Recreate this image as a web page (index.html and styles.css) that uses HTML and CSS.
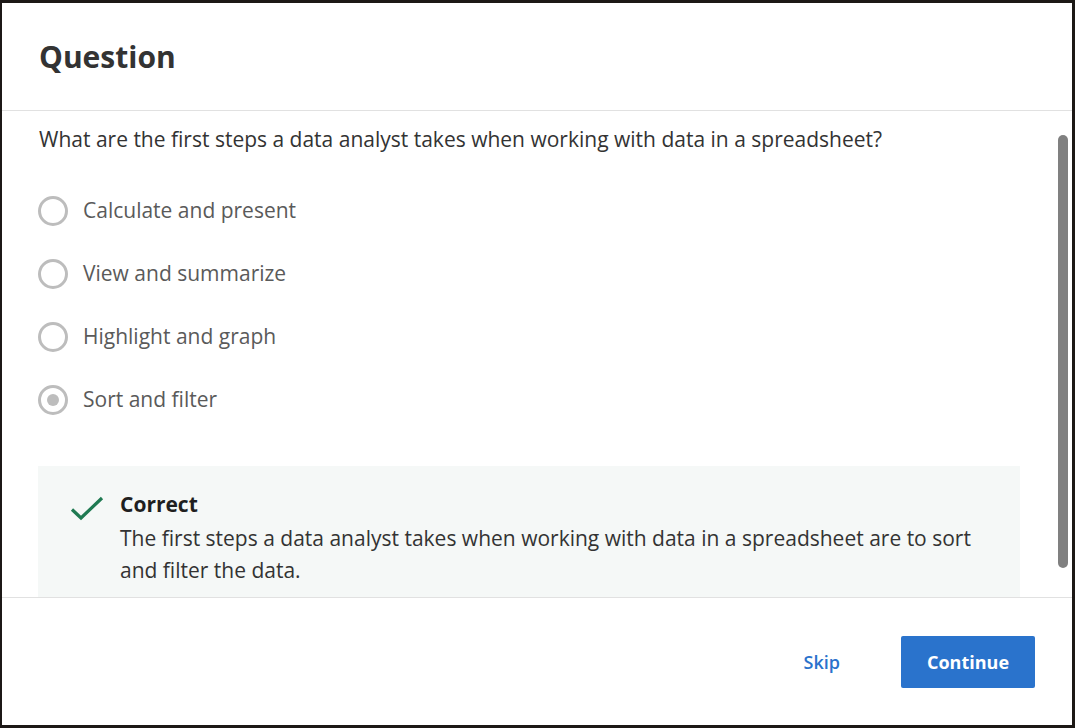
FILE: index.html
```html
<!DOCTYPE html>
<html lang="en">
<head>
<meta charset="utf-8">
<title>Question</title>
<link rel="stylesheet" href="styles.css">
</head>
<body>
<div class="dialog">
  <header class="dialog-header">
    <h1 class="title">Question</h1>
  </header>
  <main class="dialog-body">
    <p class="prompt">What are the first steps a data analyst takes when working with data in a spreadsheet?</p>
    <ul class="options">
      <li class="option"><span class="radio"></span><span class="label">Calculate and present</span></li>
      <li class="option"><span class="radio"></span><span class="label">View and summarize</span></li>
      <li class="option"><span class="radio"></span><span class="label">Highlight and graph</span></li>
      <li class="option"><span class="radio radio-checked"></span><span class="label">Sort and filter</span></li>
    </ul>
    <div class="feedback">
      <svg class="check" width="34" height="26" viewBox="0 0 34 26" aria-hidden="true">
        <path d="M2 13.5 L11 22 L32 2" fill="none" stroke="#1f7a52" stroke-width="3.2" stroke-linecap="butt" stroke-linejoin="miter"/>
      </svg>
      <div class="feedback-text">
        <div class="feedback-title">Correct</div>
        <p class="feedback-body">The first steps a data analyst takes when working with data in a spreadsheet are to sort and filter the data.</p>
      </div>
    </div>
    <div class="scrollbar"></div>
  </main>
  <footer class="dialog-footer">
    <button class="btn-link">Skip</button>
    <button class="btn-primary">Continue</button>
  </footer>
</div>
</body>
</html>
```

FILE: styles.css
```css
* { box-sizing: border-box; }
html, body { margin: 0; padding: 0; }
body {
  background: #1c1816;
  width: 1075px;
  height: 728px;
  overflow: hidden;
  font-family: "Open Sans", "Noto Sans", sans-serif;
  padding: 3px 3px 3px 2px;
}
.dialog {
  width: 1070px;
  height: 722px;
  background: #fff;
  display: flex;
  flex-direction: column;
  overflow: hidden;
}
.dialog-header {
  height: 108px;
  flex: 0 0 108px;
  border-bottom: 1px solid #e1e1e1;
  display: flex;
  align-items: center;
  padding: 0 37px;
}
.title {
  margin: 0;
  font-size: 30px;
  font-weight: 700;
  color: #333333;
}
.dialog-body {
  position: relative;
  flex: 1 1 auto;
  overflow: hidden;
  padding: 12px 52px 0 36px;
}
.prompt {
  margin: 0;
  font-size: 21px;
  line-height: 32px;
  color: #333;
  padding-left: 1px;
}
.options {
  list-style: none;
  margin: 32px 0 0;
  padding: 0;
  display: flex;
  flex-direction: column;
  gap: 15px;
}
.option {
  height: 48px;
  display: flex;
  align-items: center;
  gap: 15px;
}
.radio {
  width: 30px;
  height: 30px;
  border: 3px solid #bdbdbd;
  border-radius: 50%;
  flex: 0 0 30px;
  display: flex;
  align-items: center;
  justify-content: center;
}
.radio-checked::after {
  content: "";
  width: 12px;
  height: 12px;
  border-radius: 50%;
  background: #bdbdbd;
}
.label {
  font-size: 21px;
  color: #5a5a5a;
  margin-top: -3px;
}
.feedback {
  margin-top: 42px;
  width: 982px;
  background: #f5f8f7;
  display: flex;
  padding: 22px 30px 40px 32px;
  gap: 16px;
}
.check {
  margin-top: 8px;
  flex: 0 0 34px;
}
.feedback-title {
  font-size: 21px;
  line-height: 32px;
  font-weight: 700;
  color: #1f1f1f;
  margin-bottom: 2px;
}
.feedback-body {
  margin: 0;
  font-size: 21px;
  line-height: 32px;
  color: #333;
}
.scrollbar {
  position: absolute;
  right: 4px;
  top: 24px;
  width: 10px;
  height: 433px;
  border-radius: 5px;
  background: #808080;
}
.dialog-footer {
  flex: 0 0 128px;
  height: 128px;
  border-top: 1px solid #e1e1e1;
  display: flex;
  justify-content: flex-end;
  align-items: center;
  padding: 0 37px 0 0;
  gap: 52px;
}
.btn-link {
  font-family: inherit;
  background: none;
  border: none;
  color: #2a73cc;
  font-size: 18px;
  font-weight: 600;
  padding: 0 9px;
  cursor: pointer;
}
.btn-primary {
  font-family: inherit;
  background: #2a73cc;
  color: #fff;
  border: none;
  border-radius: 2px;
  width: 134px;
  height: 52px;
  font-size: 18px;
  font-weight: 700;
  cursor: pointer;
}
```
